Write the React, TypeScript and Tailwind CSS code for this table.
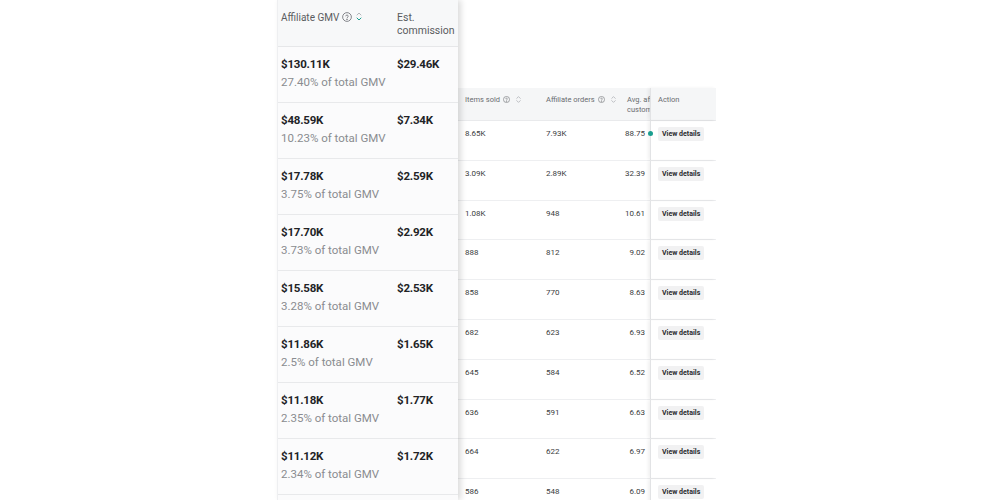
import { ChevronDown, ChevronUp } from "lucide-react";

const gmvRows = [
  { gmv: "$130.11K", share: "27.40%", commission: "$29.46K" },
  { gmv: "$48.59K", share: "10.23%", commission: "$7.34K" },
  { gmv: "$17.78K", share: "3.75%", commission: "$2.59K" },
  { gmv: "$17.70K", share: "3.73%", commission: "$2.92K" },
  { gmv: "$15.58K", share: "3.28%", commission: "$2.53K" },
  { gmv: "$11.86K", share: "2.5%", commission: "$1.65K" },
  { gmv: "$11.18K", share: "2.35%", commission: "$1.77K" },
  { gmv: "$11.12K", share: "2.34%", commission: "$1.72K" },
];

const statRows = [
  { sold: "8.65K", orders: "7.93K", avg: "88.75" },
  { sold: "3.09K", orders: "2.89K", avg: "32.39" },
  { sold: "1.08K", orders: "948", avg: "10.61" },
  { sold: "888", orders: "812", avg: "9.02" },
  { sold: "858", orders: "770", avg: "8.63" },
  { sold: "682", orders: "623", avg: "6.93" },
  { sold: "645", orders: "584", avg: "6.52" },
  { sold: "636", orders: "591", avg: "6.63" },
  { sold: "664", orders: "622", avg: "6.97" },
  { sold: "586", orders: "548", avg: "6.09" },
];

function HelpIcon({ size = 10 }: { size?: number }) {
  return (
    <svg width={size} height={size} viewBox="0 0 16 16" fill="none" stroke="currentColor" strokeWidth="1.3">
      <circle cx="8" cy="8" r="7" />
      <path d="M6 6.2a2 2 0 0 1 3.9.6c0 1.3-1.9 1.5-1.9 2.7" strokeLinecap="round" />
      <circle cx="8" cy="11.8" r="0.5" fill="currentColor" />
    </svg>
  );
}

function SortIcon({ active = false, size = 8 }: { active?: boolean; size?: number }) {
  return (
    <span className="flex flex-col items-center leading-none">
      <ChevronUp width={size} height={size} className="-mb-[3px] text-[#b5b7bb]" strokeWidth={3} />
      <ChevronDown width={size} height={size} className={active ? "text-[#1a9e8f]" : "text-[#b5b7bb]"} strokeWidth={3} />
    </span>
  );
}

export default function App() {
  return (
    <div
      className="w-[1000px] h-[500px] overflow-hidden bg-white flex"
      style={{ fontFamily: "Roboto, 'Noto Sans', sans-serif" }}
    >
      <div className="w-[277px] shrink-0" />

      {/* Pinned GMV panel */}
      <div className="relative z-10 w-[181px] shrink-0 bg-[#fbfbfc] shadow-[3px_0_6px_rgba(0,0,0,0.14)] border-l border-[#eeeff1]">
        <div className="h-[47px] flex bg-[#f7f8f9] border-b border-[#e6e7e9] text-[10px] text-[#5a5c60] leading-[13px]">
          <div className="w-[116px] pl-[3px] pt-[11px] flex items-start gap-[3px]">
            <span>Affiliate GMV</span>
            <span className="mt-[1px] text-[#6b6d72]">
              <HelpIcon size={10} />
            </span>
            <span className="-mt-[1px]">
              <SortIcon active />
            </span>
          </div>
          <div className="pt-[11px] pl-[3px] text-[10.5px]">
            Est.
            <br />
            commission
          </div>
        </div>
        {gmvRows.map((r) => (
          <div key={r.gmv} className="h-[56px] flex border-b border-[#e8e9eb]">
            <div className="w-[116px] pl-[3px] pt-[10px]">
              <div className="text-[11.5px] font-bold text-[#222326] leading-[15px] tracking-[-0.2px]">{r.gmv}</div>
              <div className="text-[11.5px] text-[#8a8c90] mt-[3px] leading-[14px]">{r.share} of total GMV</div>
            </div>
            <div className="pl-[3px] pt-[10px] text-[11.5px] font-bold text-[#222326] leading-[15px] tracking-[-0.2px]">
              {r.commission}
            </div>
          </div>
        ))}
      </div>

      {/* Background stats table */}
      <div className="w-[258px] shrink-0 mt-[88px] text-[7.5px] leading-[10px]">
        <div className="h-[33px] flex bg-[#f5f6f7] border-b border-[#e9eaec] text-[#6a6c70]">
          <div className="w-[83px] pl-[7px] pt-[7px] flex items-start gap-[3px]">
            <span>Items sold</span>
            <span className="mt-[1px]">
              <HelpIcon size={7} />
            </span>
            <span className="ml-[2px] -mt-[1px]">
              <SortIcon size={7} />
            </span>
          </div>
          <div className="w-[81px] pl-[5px] pt-[7px] flex items-start gap-[3px] whitespace-nowrap">
            <span>Affiliate orders</span>
            <span className="mt-[1px]">
              <HelpIcon size={7} />
            </span>
            <span className="ml-[2px] -mt-[1px]">
              <SortIcon size={7} />
            </span>
          </div>
          <div className="w-[28px] overflow-hidden pl-[5px] pt-[7px] whitespace-nowrap">
            Avg. affiliate
            <br />
            customers
          </div>
          <div className="flex-1 border-l border-[#e2e3e5] shadow-[-2px_0_3px_rgba(0,0,0,0.06)] pl-[7px] pt-[7px]">
            Action
          </div>
        </div>
        {statRows.map((r, i) => (
          <div key={r.sold + i} className="h-[39.8px] flex border-b border-[#eeeff1] text-[#3a3c40] text-[8px]">
            <div className="w-[83px] pl-[7px] pt-[8px]">{r.sold}</div>
            <div className="w-[81px] pl-[5px] pt-[8px]">{r.orders}</div>
            <div className="w-[28px] pr-[5px] pt-[8px] text-right">{r.avg}</div>
            <div className="relative flex-1 border-l border-[#e2e3e5] shadow-[-2px_0_3px_rgba(0,0,0,0.06)] pl-[7px] pt-[6px]">
              {i === 0 && (
                <span className="absolute -left-[3px] top-[10px] w-[5px] h-[5px] rounded-full bg-[#1a9e8f]" />
              )}
              <span className="inline-block bg-[#f1f1f2] rounded-[2px] px-[4px] py-[2px] font-bold text-[7px] text-[#2a2b2e] whitespace-nowrap">
                View details
              </span>
            </div>
          </div>
        ))}
      </div>
    </div>
  );
}
